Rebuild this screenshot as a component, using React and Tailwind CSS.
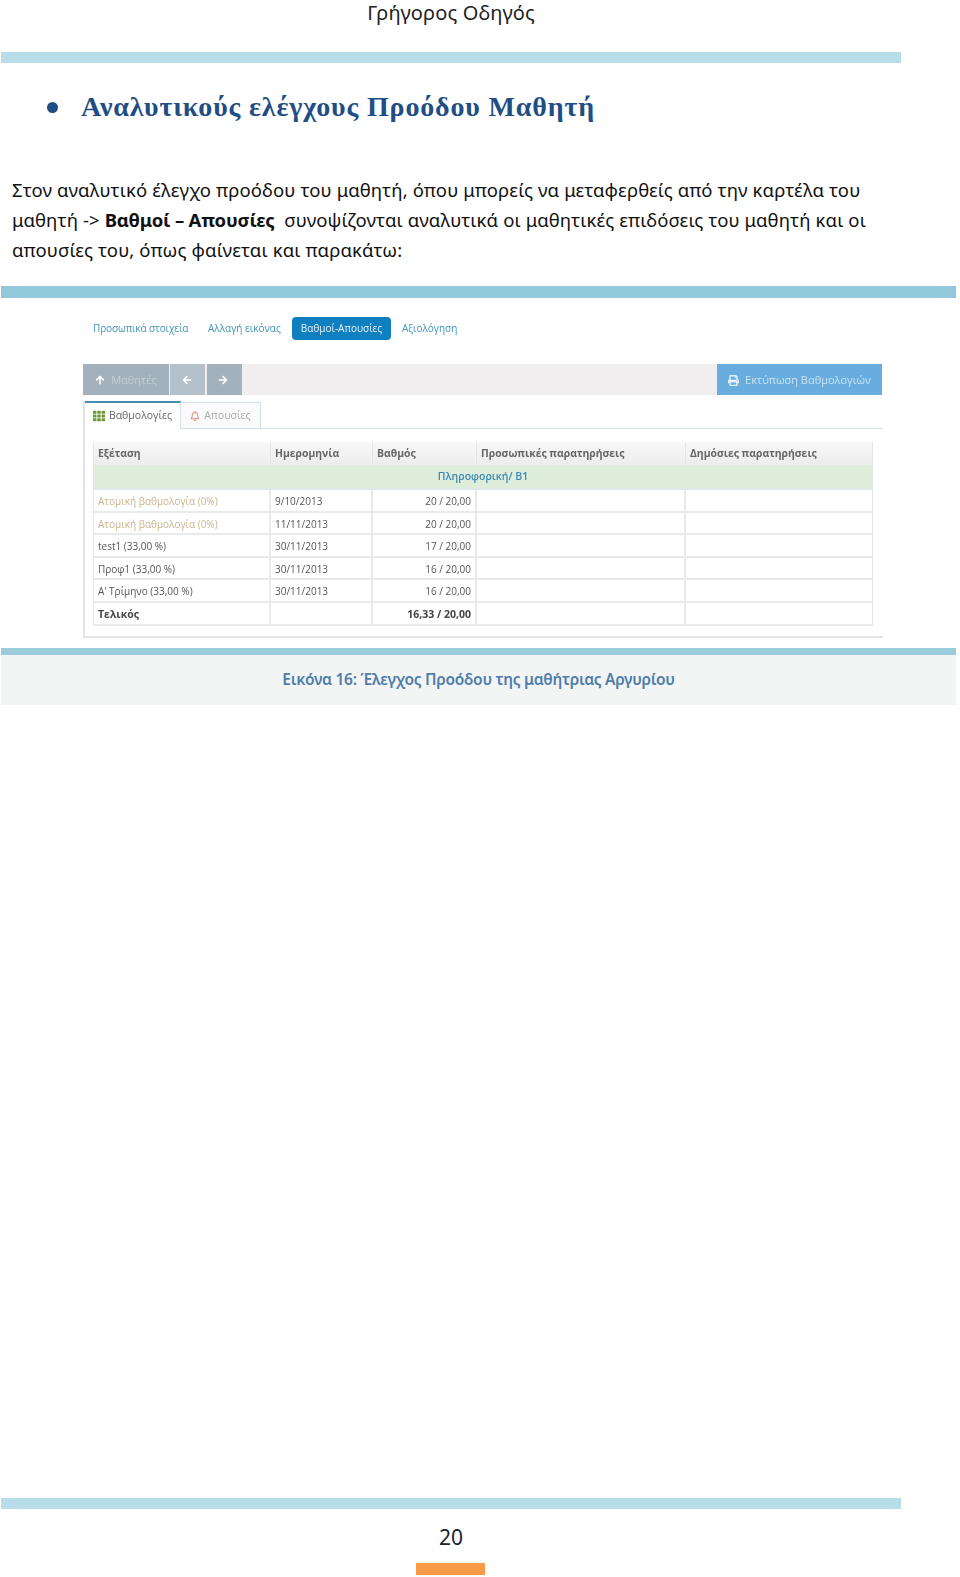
import { FaArrowUp, FaArrowLeft, FaArrowRight, FaPrint, FaTh, FaRegBell } from "react-icons/fa";

const rows = [
  { name: "Ατομική βαθμολογία (0%)", date: "9/10/2013", grade: "20 / 20,00", muted: true, h: "h-[23px]" },
  { name: "Ατομική βαθμολογία (0%)", date: "11/11/2013", grade: "20 / 20,00", muted: true, h: "h-[22px]" },
  { name: "test1 (33,00 %)", date: "30/11/2013", grade: "17 / 20,00", h: "h-[23px]" },
  { name: "Προφ1 (33,00 %)", date: "30/11/2013", grade: "16 / 20,00", h: "h-[22px]" },
  { name: "Α' Τρίμηνο (33,00 %)", date: "30/11/2013", grade: "16 / 20,00", h: "h-[23px]" },
];

const columns = "grid grid-cols-[177px_102px_104px_209px_1fr]";

function GradesTable() {
  return (
    <div className="w-[780px] ml-[8px] mt-[13px] border-l border-r border-[#e3e6e8] text-[10px] text-[#555]">
      {/* Header */}
      <div className={`${columns} h-[23px] bg-gradient-to-b from-[#f8f8f8] to-[#ececec] text-[10.4px] font-bold text-[#666]`}>
        {["Εξέταση", "Ημερομηνία", "Βαθμός", "Προσωπικές παρατηρήσεις", "Δημόσιες παρατηρήσεις"].map((title) => (
          <div key={title} className="flex items-center pt-px px-[4px] border-r border-[#e3e6e8] last:border-r-0">
            {title}
          </div>
        ))}
      </div>
      <div className="h-[25px] pt-px flex items-center justify-center bg-[#deeeda] border-b-2 border-[#dfe7ea] text-[10.5px] font-semibold text-[#3d88b5]">
        Πληροφορική/ Β1
      </div>

      {/* Rows */}
      {rows.map((row, i) => (
        <div key={i} className={`${columns} ${row.h} border-b-2 border-[#e8eaeb]`}>
          <div className={`flex items-center pt-[2px] px-[4px] border-r-2 border-[#e8eaeb] ${row.muted ? "text-[#c9b48c]" : ""}`}>{row.name}</div>
          <div className="flex items-center pt-[2px] px-[4px] border-r-2 border-[#e8eaeb]">{row.date}</div>
          <div className="flex items-center justify-end pt-[2px] px-[4px] border-r-2 border-[#e8eaeb]">{row.grade}</div>
          <div className="border-r-2 border-[#e8eaeb]"></div>
          <div></div>
        </div>
      ))}
      <div className={`${columns} h-[23px] border-b-2 border-[#e8eaeb] font-bold text-[#444] text-[10.5px]`}>
        <div className="flex items-center pt-[2px] px-[4px] border-r-2 border-[#e8eaeb]">Τελικός</div>
        <div className="border-r-2 border-[#e8eaeb]"></div>
        <div className="flex items-center justify-end pt-[2px] px-[4px] border-r-2 border-[#e8eaeb]">16,33 / 20,00</div>
        <div className="border-r-2 border-[#e8eaeb]"></div>
        <div></div>
      </div>
    </div>
  );
}

function AppShot() {
  return (
    <div className="h-[350px] pl-[83px] font-['Open_Sans',sans-serif] blur-[0.3px]">
      {/* Profile nav */}
      <div className="h-[66px] pt-[19px] flex items-start text-[10px] text-[#3f93b8]">
        <div className="h-[23px] flex items-center pl-[10px] w-[125px] tracking-[-0.1px]">Προσωπικά στοιχεία</div>
        <div className="h-[23px] flex items-center w-[84px]">Αλλαγή εικόνας</div>
        <div className="h-[23px] w-[99px] flex items-center justify-center rounded bg-[#0f7fc0] text-[#e6f3fa]">Βαθμοί-Απουσίες</div>
        <div className="h-[23px] flex items-center ml-[11px]">Αξιολόγηση</div>
      </div>

      {/* Toolbar */}
      <div className="w-[799px] h-[31px] flex bg-[#f0eeee] text-[11px] text-[#c3ccd3]">
        <div className="w-[86px] pt-px flex items-center justify-center gap-[6px] bg-[#a3b1bc]">
          <FaArrowUp className="text-[10px] text-white" />
          Μαθητές
        </div>
        <div className="w-[35px] ml-px pr-[2px] flex items-center justify-center bg-[#b4c0ca]">
          <FaArrowLeft className="text-[10px] text-white" />
        </div>
        <div className="w-[35px] ml-[2px] pr-[3px] flex items-center justify-center bg-[#a3b1bc]">
          <FaArrowRight className="text-[10px] text-white" />
        </div>
        <div className="w-[165px] pt-px ml-auto flex items-center justify-center gap-[6px] bg-[#68addd] text-[#c9e2f3]">
          <FaPrint className="text-[11px] text-[#e4f1f9]" />
          Εκτύπωση Βαθμολογιών
        </div>
      </div>

      {/* Tabs and panel */}
      <div className="w-[800px] mt-[6px] h-[237px] border-l-2 border-b-2 border-[#e2e4e5]">
        <div className="h-[28px] flex items-end border-b border-[#d5e1e6] text-[10.5px]">
          <div className="w-[96px] h-[28px] flex items-center justify-center gap-[4px] border-t-2 border-r border-t-[#4a8cb0] border-r-[#d5e1e6] text-[#666] -mb-px bg-white">
            <FaTh className="text-[12px] text-[#6c9a3c]" />
            Βαθμολογίες
          </div>
          <div className="w-[80px] h-[26px] flex items-center justify-center gap-[4px] border-t border-r border-[#d5e1e6] bg-[#fafafa] text-[#aaa]">
            <FaRegBell className="text-[10px] text-[#d98b80]" />
            Απουσίες
          </div>
        </div>
        <GradesTable />
      </div>
    </div>
  );
}

export default function App() {
  return (
    <div className="w-[960px] h-[1577px] flex flex-col bg-white font-['Open_Sans',sans-serif] text-black">
      {/* Page header */}
      <div className="h-[52px] w-[902px] text-center text-[20px] leading-[26px] text-[#222] font-['Noto_Sans',sans-serif] tracking-[0.13px]">
        Γρήγορος Οδηγός
      </div>
      <div className="h-[11px] w-[900px] ml-px bg-[#b7dde9]"></div>

      {/* Section heading */}
      <div className="mt-[26px] h-[36px] flex items-center pl-[47px]">
        <span className="w-[11px] h-[11px] rounded-full bg-[#1f4e85]"></span>
        <h2 className="ml-[23px] text-[28px] font-bold text-[#1f4e85] font-['Liberation_Serif',serif] tracking-[0.85px]">
          Αναλυτικούς ελέγχους Προόδου Μαθητή
        </h2>
      </div>

      {/* Paragraph */}
      <p className="mt-[50px] ml-[12px] w-[930px] text-[18.5px] leading-[30px] text-[#111] font-['Noto_Sans',sans-serif] tracking-[0.12px]">
        Στον αναλυτικό έλεγχο προόδου του μαθητή, όπου μπορείς να μεταφερθείς από την καρτέλα του
        <br />
        μαθητή -&gt; <b className="tracking-[-0.2px]">Βαθμοί – Απουσίες</b>&nbsp; συνοψίζονται αναλυτικά οι μαθητικές επιδόσεις του μαθητή και οι
        <br />
        απουσίες του, όπως φαίνεται και παρακάτω:
      </p>

      {/* Figure */}
      <div className="mt-[21px] h-[12px] w-[955px] ml-px bg-[#92c9da]"></div>
      <AppShot />
      <div className="w-[955px] ml-px h-[57px] flex flex-col bg-[#f3f4f4]">
        <div className="h-[7px] bg-[#9accdb]"></div>
        <div className="flex-1 flex items-center justify-center text-[15.5px] font-semibold text-[#4f7eab] font-['Noto_Sans',sans-serif] tracking-[-0.28px]">
          Εικόνα 16: Έλεγχος Προόδου της μαθήτριας Αργυρίου
        </div>
      </div>

      {/* Page footer */}
      <div className="mt-auto h-[11px] w-[900px] ml-px bg-[#b7dde9]"></div>
      <div className="w-[902px] h-[54px] pt-[13px] text-center text-[21px] leading-[30px] text-[#1a2230] font-['Noto_Sans',sans-serif]">
        20
      </div>
      <div className="h-[12px] w-[69px] ml-[416px] mb-[2px] bg-[#fb9a49]"></div>
    </div>
  );
}
